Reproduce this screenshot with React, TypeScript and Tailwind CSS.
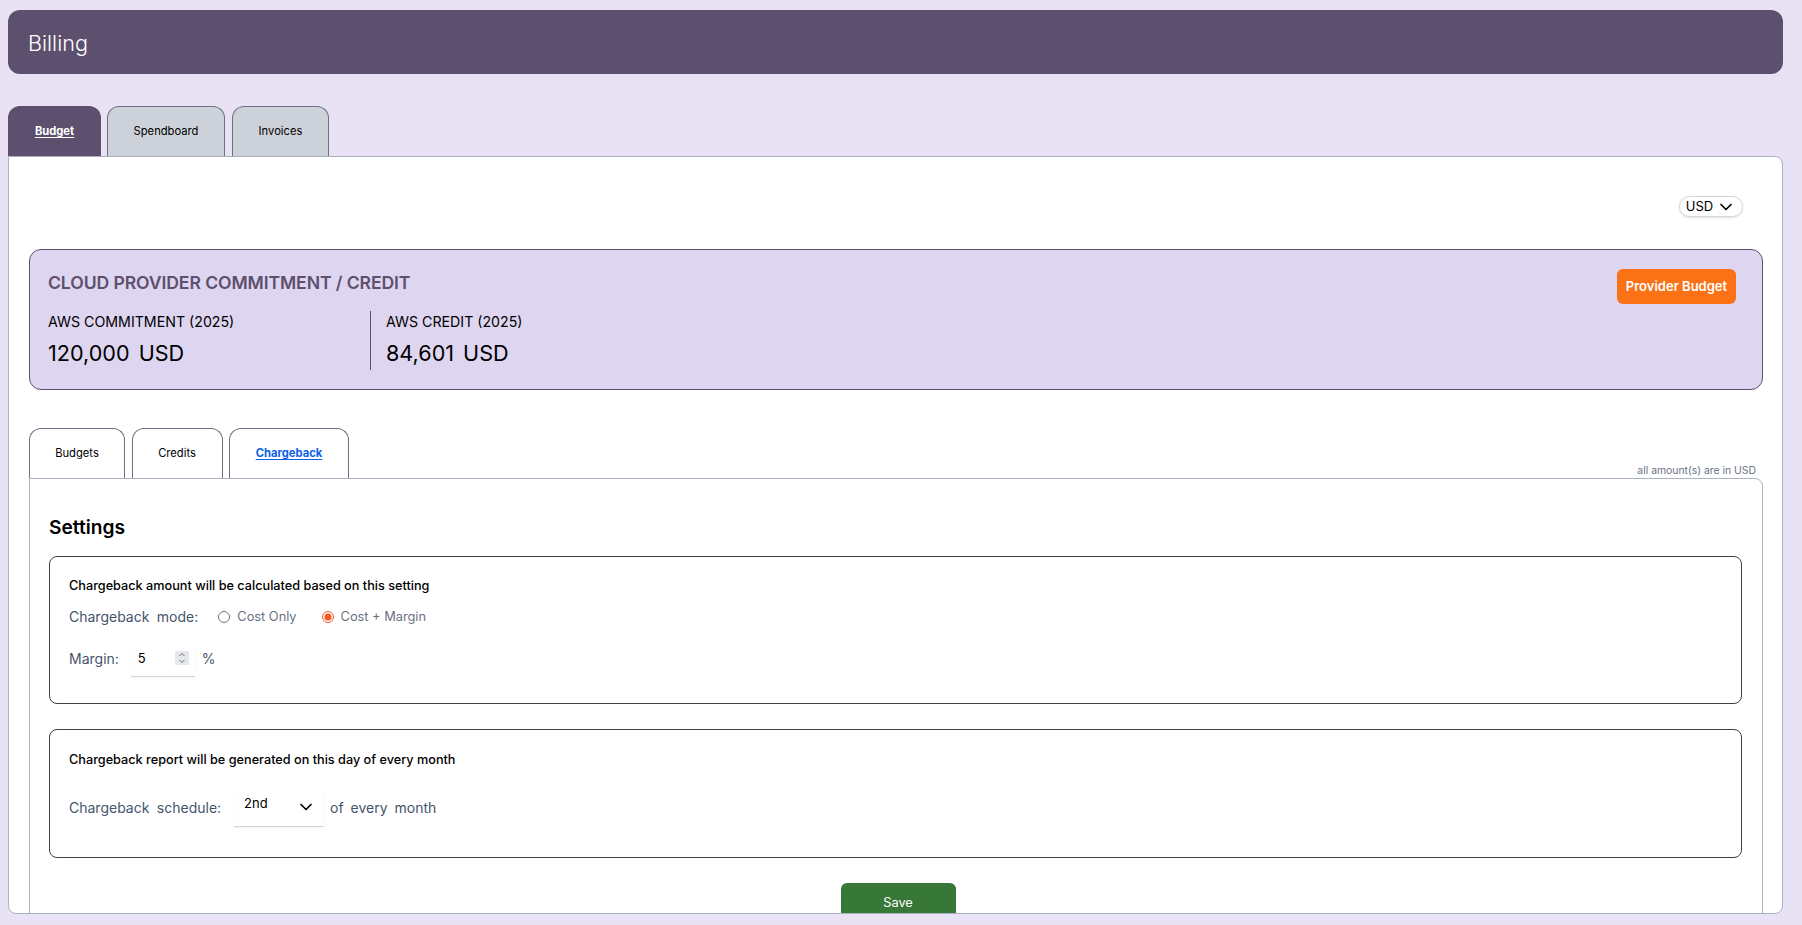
import React from 'react';
import { ChevronDown } from 'lucide-react';

const App = () => {
  const topTabs = [
    { name: 'Budget', width: 'w-[93px]', active: true },
    { name: 'Spendboard', width: 'w-[118px]', active: false },
    { name: 'Invoices', width: 'ml-px w-[97px]', active: false },
  ];

  const subTabs = [
    { name: 'Budgets', width: 'w-[96px]', active: false },
    { name: 'Credits', width: 'w-[91px]', active: false },
    { name: 'Chargeback', width: 'w-[120px]', active: true },
  ];

  return (
    <div className="h-[925px] overflow-hidden bg-[#e9e2f5] pt-[10px] pl-[8px] pr-[19px] font-['Inter',sans-serif] text-black">
      {/* Page title */}
      <div className="flex h-[64px] items-center rounded-xl bg-[#5d4f6e] pt-[2px] pl-[20px] text-[21.6px] font-light text-white">
        Billing
      </div>

      {/* Top tabs */}
      <div className="mt-[32px] flex h-[50px] gap-[6px]">
        {topTabs.map((tab) => (
          <div
            key={tab.name}
            className={`flex items-center justify-center rounded-t-xl border border-b-0 text-[11.2px] ${tab.width} ${
              tab.active
                ? 'border-[#5d4f6e] bg-[#5d4f6e] font-bold text-white underline underline-offset-2'
                : 'border-gray-500 bg-[#cdd1d9] text-black'
            }`}
          >
            {tab.name}
          </div>
        ))}
      </div>

      <div className="h-[758px] overflow-hidden rounded-b-lg rounded-tr-lg border border-[#aab2c0] bg-white pr-[19px] pl-[20px]">
        {/* Currency */}
        <div className="flex justify-end pt-[39px] pr-[20px]">
          <div className="flex h-[21px] w-[64px] items-center justify-center gap-[3px] rounded-full border border-gray-300 text-[13px] shadow-sm">
            USD
            <ChevronDown className="h-5 w-5" />
          </div>
        </div>

        {/* Commitment card */}
        <div className="relative mt-[32px] h-[141px] rounded-xl border border-[#5d4f6e] bg-[#ded5f0] pt-[21px] pl-[18px]">
          <h2 className="text-[17.6px] leading-[24px] font-semibold tracking-[-0.1px] text-[#5d4f6e]">CLOUD PROVIDER COMMITMENT / CREDIT</h2>
          <div className="mt-[16px] flex">
            <div className="h-[59px] w-[323px] border-r border-[#5d4f6e] pt-[1px]">
              <p className="text-[14.2px] leading-[20px]">AWS COMMITMENT (2025)</p>
              <p className="mt-[7px] text-[21.6px] leading-[28px] [word-spacing:3px]">120,000 USD</p>
            </div>
            <div className="pt-[1px] pl-[15px]">
              <p className="text-[14.2px] leading-[20px]">AWS CREDIT (2025)</p>
              <p className="mt-[7px] text-[21.6px] leading-[28px] [word-spacing:3px]">84,601 USD</p>
            </div>
          </div>
          <button className="absolute top-[19px] right-[26px] h-[35px] w-[119px] rounded-md bg-[#fb7216] text-[13px] font-semibold text-white">
            Provider Budget
          </button>
        </div>

        {/* Sub tabs */}
        <div className="mt-[38px] flex h-[50px] items-end justify-between">
          <div className="flex h-full gap-[6.5px]">
            {subTabs.map((tab) => (
              <div
                key={tab.name}
                className={`flex items-center justify-center rounded-t-xl border border-b-0 border-gray-500 text-[11.2px] ${tab.width} ${
                  tab.active ? 'font-bold text-[#0b5fe8] underline underline-offset-2' : 'text-black'
                }`}
              >
                {tab.name}
              </div>
            ))}
          </div>
          <p className="pr-[7px] text-[10.4px] leading-[15px] text-gray-500">all amount(s) are in USD</p>
        </div>

        {/* Chargeback settings */}
        <div className="rounded-tr-lg border border-[#aab2c0] pt-[34px] pr-[20px] pb-[40px] pl-[19px]">
          <h3 className="text-[19.2px] leading-[28px] font-semibold">Settings</h3>

          <div className="mt-[15px] h-[148px] rounded-lg border border-[#3f3f46] pt-[19px] pl-[19px]">
            <p className="text-[12.7px] leading-[20px] font-medium">Chargeback amount will be calculated based on this setting</p>
            <div className="mt-[11px] flex h-[20px] items-center text-sm text-slate-600">
              <span className="[word-spacing:3.5px]">Chargeback mode:</span>
              <label className="ml-[20px] flex items-center gap-[7px] text-[12.8px] text-gray-500">
                <input type="radio" name="mode" className="m-0 h-3 w-3" />
                Cost Only
              </label>
              <label className="ml-[25px] flex items-center gap-[7px] text-[12.8px] text-gray-500">
                <input type="radio" name="mode" defaultChecked className="m-0 h-3 w-3 accent-[#ee5a24]" />
                Cost + Margin
              </label>
            </div>
            <div className="mt-[13px] flex h-[37px] items-center text-sm text-slate-600">
              <span>Margin:</span>
              <div className="ml-[12px] flex h-[37px] w-[64px] items-center justify-between border-b border-gray-300 pr-[6px] pl-[7px] text-[13px] text-black shadow-xs">
                5
                <span className="flex h-[14px] w-[14px] items-center justify-center bg-gray-200">
                  <svg width="8" height="12" viewBox="0 0 8 12" fill="none" stroke="#6b7280" strokeWidth="1">
                    <polyline points="1.5,4 4,1.5 6.5,4" />
                    <polyline points="1.5,8 4,10.5 6.5,8" />
                  </svg>
                </span>
              </div>
              <span className="ml-[7px]">%</span>
            </div>
          </div>

          <div className="mt-[25px] h-[129px] rounded-lg border border-[#3f3f46] pt-[20px] pl-[19px]">
            <p className="text-[12.7px] leading-[20px] font-medium">Chargeback report will be generated on this day of every month</p>
            <div className="mt-[18px] flex h-[39px] items-center text-sm text-slate-600 [word-spacing:3px]">
              <span className="[word-spacing:3.5px]">Chargeback schedule:</span>
              <div className="ml-[13px] flex h-[39px] w-[90px] items-center justify-between border-b border-gray-300 pr-[8px] pl-[10px] shadow-xs">
                <span className="-mt-[8px] text-[13px] text-black">2nd</span>
                <ChevronDown className="h-5 w-5 text-black" />
              </div>
              <span className="ml-[6px]">of every month</span>
            </div>
          </div>

          <div className="mt-[25px] flex justify-center pl-[5px]">
            <button className="h-[40px] w-[115px] rounded-md bg-[#377737] text-[12.8px] text-white">
              Save
            </button>
          </div>
        </div>
      </div>
    </div>
  );
};

export default App;
